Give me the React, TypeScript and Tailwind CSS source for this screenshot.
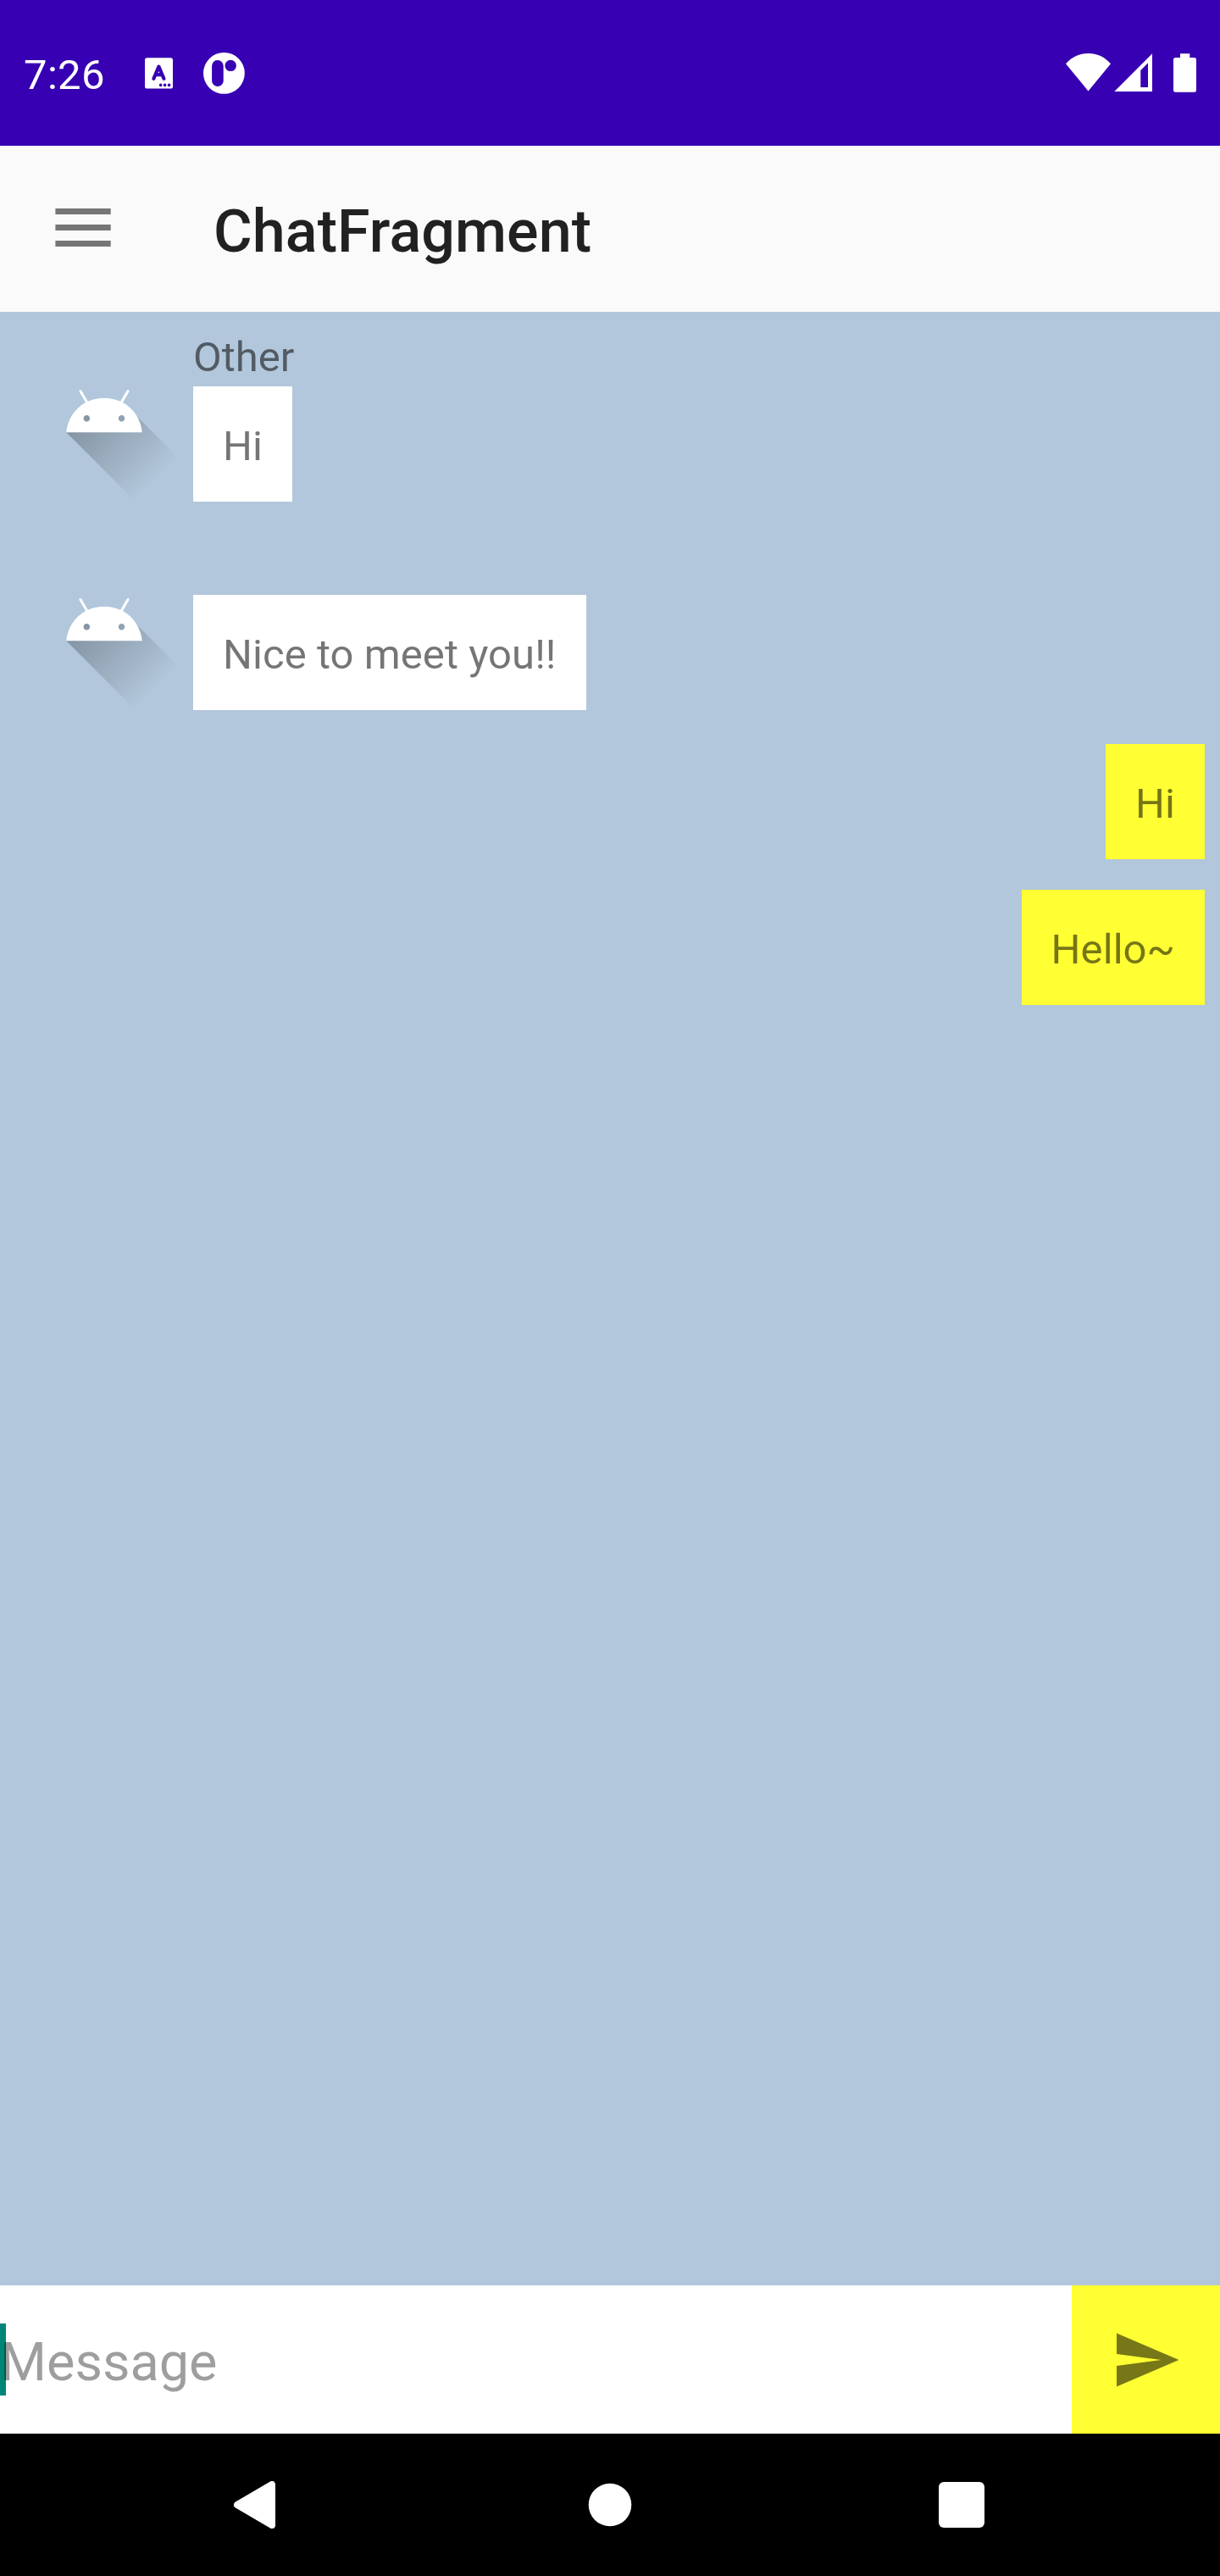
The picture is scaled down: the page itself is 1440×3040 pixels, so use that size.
import type { ReactNode } from "react";

type Message = { text: string; sender?: string };

const received: Message[] = [{ text: "Hi", sender: "Other" }, { text: "Nice to meet you!!" }];
const sent: Message[] = [{ text: "Hi" }, { text: "Hello~" }];

function StatusBar() {
  return (
    <header className="flex h-[172px] shrink-0 items-start justify-between bg-[#3700b3] text-white">
      <div className="flex pl-7 pt-[57px]">
        <span className="mt-px w-[143px] text-[49px] leading-[61px] tracking-[0.35px]">7:26</span>
        <svg className="mt-[11px]" width="33" height="37" viewBox="0 0 33 37">
          <rect y="0.2" width="33" height="36.3" rx="2.6" fill="#fff" />
          <path d="M10.4 24.8 16.4 10.6 22.4 24.8M12.6 20.2H20.2" fill="none" stroke="#3700b3" strokeWidth="4.2" strokeLinecap="round" strokeLinejoin="round" />
          <g fill="#3700b3">
            <circle cx="18.6" cy="32.4" r="1.8" />
            <circle cx="23.6" cy="32.4" r="1.8" />
            <circle cx="28.6" cy="32.4" r="1.8" />
          </g>
        </svg>
        <svg className="ml-9 mt-[5px]" width="49" height="49" viewBox="0 0 49 49">
          <circle cx="24.4" cy="24.4" r="24.4" fill="#fff" />
          <rect x="10.1" y="9" width="13.6" height="31" rx="6.8" fill="#3700b3" />
          <circle cx="32.2" cy="15.4" r="6.7" fill="#3700b3" />
        </svg>
      </div>
      <div className="flex pr-7 pt-[63px]">
        <svg width="53" height="46" viewBox="0 0 53 46">
          <path d="M0 12.2C7 4.2 16.2 0 26.5 0S46 4.2 53 12.2L26.5 44.6Z" fill="#fff" />
        </svg>
        <svg className="ml-1" width="45" height="46" viewBox="0 0 45 46">
          <path fillRule="evenodd" d="M0.3 45 45 0.3V45ZM31.3 20V40H40V11.3Z" fill="#fff" />
        </svg>
        <svg className="ml-[25px]" width="27" height="46" viewBox="0 0 27 46">
          <path d="M8 0.3H19.3V5H24.5Q27 5 27 7.5V43.3Q27 45.8 24.5 45.8H2.5Q0 45.8 0 43.3V7.5Q0 5 2.5 5H8Z" fill="#fff" />
        </svg>
      </div>
    </header>
  );
}

function Toolbar() {
  return (
    <div className="flex h-[196px] shrink-0 items-start bg-[#fafafa]">
      <button aria-label="Open menu" className="ml-[65px] mt-[74px]">
        <svg className="block" width="66" height="45" viewBox="0 0 66 45" fill="#757575">
          <rect x="0.4" width="65.3" height="7" />
          <rect x="0.4" y="19" width="65.3" height="7" />
          <rect x="0.4" y="38" width="65.3" height="7" />
        </svg>
      </button>
      <h1 className="ml-[121px] mt-[60px] text-[70px] font-medium leading-[82px] tracking-[0.1px] text-[#212121]">ChatFragment</h1>
    </div>
  );
}

function Avatar({ id }: { id: string }) {
  return (
    <svg className="shrink-0" width="210" height="210" viewBox="0 0 108 108">
      <defs>
        <linearGradient id={id} gradientUnits="userSpaceOnUse" x1="42.9492" y1="49.59793" x2="85.84757" y2="92.4963">
          <stop offset="0" stopColor="#000" stopOpacity="0.267" />
          <stop offset="1" stopColor="#000" stopOpacity="0" />
        </linearGradient>
      </defs>
      <path fill={`url(#${id})`} d="M31,63.928c0,0 6.4,-11 12.1,-13.1c7.2,-2.6 26,-1.4 26,-1.4l38.1,38.1L107,108.928l-32,-1L31,63.928z" />
      <path
        fill="#fff"
        fillRule="evenodd"
        d="M65.3,45.828l3.8,-6.6c0.2,-0.4 0.1,-0.9 -0.3,-1.1c-0.4,-0.2 -0.9,-0.1 -1.1,0.3l-3.9,6.7c-6.3,-2.8 -13.4,-2.8 -19.7,0l-3.9,-6.7c-0.2,-0.4 -0.7,-0.5 -1.1,-0.3C38.8,38.328 38.7,38.828 38.9,39.228l3.8,6.6C36.2,49.428 31.7,56.028 31,63.928h46C76.3,56.028 71.8,49.428 65.3,45.828zM43.4,57.328c-0.8,0 -1.5,-0.5 -1.8,-1.2c-0.3,-0.7 -0.1,-1.5 0.4,-2.1c0.5,-0.5 1.4,-0.7 2.1,-0.4c0.7,0.3 1.2,1 1.2,1.8C45.3,56.528 44.5,57.328 43.4,57.328L43.4,57.328zM64.6,57.328c-0.8,0 -1.5,-0.5 -1.8,-1.2s-0.1,-1.5 0.4,-2.1c0.5,-0.5 1.4,-0.7 2.1,-0.4c0.7,0.3 1.2,1 1.2,1.8C66.5,56.528 65.6,57.328 64.6,57.328L64.6,57.328z"
      />
    </svg>
  );
}

function Bubble({ mine = false, children }: { mine?: boolean; children: ReactNode }) {
  return (
    <p
      className={`w-fit whitespace-nowrap px-[35px] pb-[32px] pt-[38px] text-[49px] leading-[66px] tracking-[0.06px] text-black/54 ${
        mine ? "bg-[#ffff33]" : "bg-white"
      }`}
    >
      {children}
    </p>
  );
}

function Composer() {
  return (
    <div className="flex h-[175px] shrink-0 bg-white">
      <div className="relative flex-1 pt-[53px]">
        <span className="absolute left-0 top-[45px] h-[85px] w-[7px] bg-[#008577]" />
        <span className="relative block text-[63px] leading-[76px] text-black/38">Message</span>
      </div>
      <button aria-label="Send" className="flex w-[175px] items-center justify-center bg-[#ffff33]">
        <svg width="84" height="84" viewBox="0 0 24 24">
          <path d="M2.01 21 23 12 2.01 3 2 10l15 2-15 2z" fill="#777718" />
        </svg>
      </button>
    </div>
  );
}

function NavigationBar() {
  return (
    <nav className="flex h-[168px] shrink-0 items-center bg-black pl-[276px]">
      <svg width="49" height="56" viewBox="0 0 49 56">
        <path d="M4 28 45 4V52Z" fill="#fff" stroke="#fff" strokeWidth="8" strokeLinejoin="round" />
      </svg>
      <svg className="ml-[369px]" width="52" height="52" viewBox="0 0 52 52">
        <circle cx="26" cy="26" r="25.3" fill="#fff" />
      </svg>
      <span className="ml-[362px] h-[54px] w-[54px] rounded-[6px] bg-white" />
    </nav>
  );
}

export default function App() {
  return (
    <div className="flex h-[3040px] w-[1440px] flex-col overflow-hidden font-['Roboto',sans-serif]">
      <StatusBar />
      <Toolbar />
      <main className="flex flex-1 flex-col bg-[#b2c7db]">
        {received.map((m, i) => (
          <div key={i} className="flex h-[246px] items-start pl-[18px] pt-[18px]">
            <Avatar id={`shadow-${i}`} />
            <div>
              <div className="h-[70px] pt-[3px] text-[49px] leading-[66px] text-black/54">{m.sender}</div>
              <Bubble>{m.text}</Bubble>
            </div>
          </div>
        ))}
        {sent.map((m, i) => (
          <div key={i} className="flex h-[172px] items-start justify-end pr-[18px] pt-[18px]">
            <Bubble mine>{m.text}</Bubble>
          </div>
        ))}
      </main>
      <Composer />
      <NavigationBar />
    </div>
  );
}
